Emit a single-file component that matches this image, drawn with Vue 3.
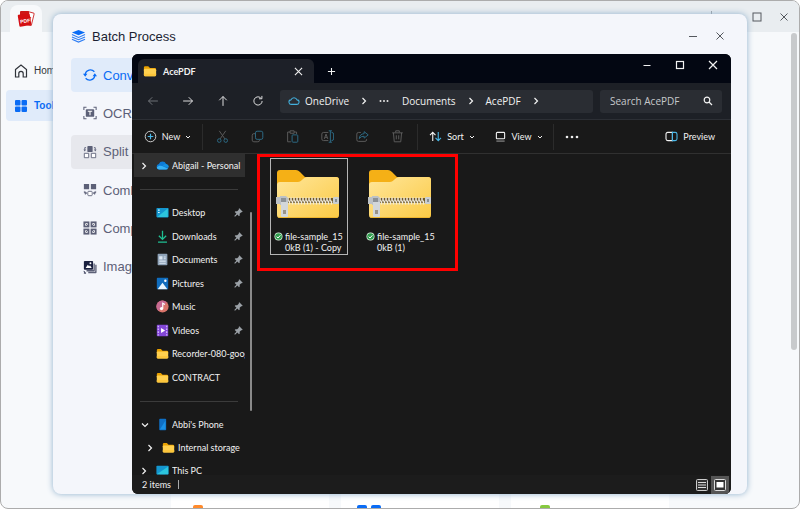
<script setup>
const folder =
  '<path d="M1 4q0-1.500 1.500-1.500h3.500l2 2h5.500q1.500 0 1.500 1.500v2H1z" fill="#e9a100"/><path d="M1 6.500q0-1 1-1h11q2 0 2 1.500v5.500q0 1.500-1.500 1.500h-11Q1 14 1 12.500z" fill="#ffd04f"/><path d="M1 11v1.500Q1 14 2.500 14h11q1.500 0 1.500-1.500V11z" fill="#fcc63c"/>'

const icons = {
  folder,
  desktop: '<rect x="0.500" y="2.500" width="15" height="11.500" rx="1" fill="#1496cf"/><path d="M1.500 13.500L14.500 3v10.500z" fill="#2cc5dd"/><path d="M2.500 5h2M2.500 8h2" stroke="#d9f8ff" stroke-width="1.500"/>',
  downloads: '<path d="M8 1v10M3.500 7L8 11.500 12.500 7M2.500 15h11" fill="none" stroke="#1fbf93" stroke-width="1.600"/>',
  documents: '<rect x="2" y="1" width="12" height="14" rx="1" fill="#8fa3b8"/><path d="M4 4h4v4H4z" fill="#dce7f2"/><path d="M9.500 5H12M9.500 7H12M4 10h8M4 12.500h8" stroke="#dce7f2" stroke-width="1.300"/>',
  pictures: '<rect x="1" y="1" width="14" height="14" rx="1" fill="#0f6cbd"/><path d="M2 15l6-8 6 8z" fill="#e7f6ff"/><circle cx="11.500" cy="4.500" r="1.500" fill="#fff"/>',
  music: '<circle cx="8" cy="8" r="7.500" fill="#d9746a"/><path d="M8 .5A7.500 7.500 0 0 0 3 13.500L13 2.500A7.500 7.500 0 0 0 8 .5z" fill="#c76a92"/><circle cx="6.800" cy="10.500" r="2" fill="#fff"/><path d="M8.300 10.500V4l2.700 1.500" fill="none" stroke="#fff" stroke-width="1.400"/>',
  videos: '<rect x="1" y="1" width="14" height="14" rx="1" fill="#8246d6"/><path d="M2.800 2v12M13.200 2v12" stroke="#d8bdff" stroke-width="1.500" stroke-dasharray="2 1.500"/><path d="M6.200 5v6l5-3z" fill="#fff"/>',
  cloud: '<path d="M4 13a3.500 3.500 0 0 1-.5-6.900A5 5 0 0 1 12.500 6 3.600 3.600 0 0 1 12.500 13z" fill="#0d7bd6"/><path d="M1 10.500C3 7.500 7 8 9.500 9.500l5.500 2.500q-1 1-2.500 1H4q-2.500 0-3-2.500z" fill="#36b2f4"/><path d="M8 8.500q2-3.500 5.500-2 2.500 1.200 2.300 4z" fill="#1490df"/>',
  phone: '<rect x="4" y="1" width="8.500" height="14" rx="1" fill="#0f6fc5"/><path d="M4.800 14L11.700 3v11z" fill="#1b90e5"/>',
  pc: '<rect x="0.500" y="2" width="15" height="11" rx="1" fill="#1496cf"/><path d="M1 12.500L15 3v9.500z" fill="#2cc5dd"/><path d="M5 14h6" stroke="#8aa" />',
  pin: '<path d="M9.500 .5l6 6-1.400 1.200-1.300-.3-2.800 3 .2 3-1.300 1.300L6 11.600 1.800 15.500l-1.300-1.300L4.400 10 1.300 6.900l1.300-1.300 3 .2 3-2.800-.3-1.300z" fill="#9ba1a7"/>',
  back: '<path d="M14.500 8H2M7 3L2 8l5 5" class="line"/>',
  forward: '<path d="M1.500 8H14M9 3l5 5-5 5" class="line"/>',
  up: '<path d="M8 14.500V2M3 7l5-5 5 5" class="line"/>',
  refresh: '<path d="M13.500 8A5.500 5.500 0 1 1 11.500 3.700M13.200 1.200v3.800H9.400" class="line"/>',
  cut: '<path d="M4 1l7 10M12 1L5 11" class="line"/><g stroke="#2d6b86" fill="none" stroke-width="1.200"><circle cx="4" cy="13" r="2.200"/><circle cx="12" cy="13" r="2.200"/></g>',
  copy: '<path d="M5 4.500H3.500q-2 0-2 2v6q0 2 2 2h5q2 0 2-2" class="line"/><rect x="5.500" y="1.500" width="9" height="10" rx="2" fill="none" stroke="#2d6b86" stroke-width="1.200"/>',
  paste: '<path d="M5 2.500H2v12h4M10 2.500h3V5M5 1h5v3H5z" class="line"/><rect x="7.500" y="6" width="7" height="9" rx="1" fill="none" stroke="#2d6b86" stroke-width="1.200"/>',
  rename: '<path d="M9 3H3Q1 3 1 5v6q0 2 2 2h6M4 11l2.200-6 2.200 6M5 9h2.500" class="line"/><path d="M9.500 1h4M9.500 15h4M11.500 1v14M13 3q2.500 0 2.500 2v6q0 2-2.500 2" fill="none" stroke="#2d6b86" stroke-width="1.200"/>',
  share: '<path d="M6 3H3Q1 3 1 5v7q0 2 2 2h8q2 0 2-2v-1" class="line"/><path d="M10 2l5 4-5 4V7.700Q6 7.500 4 10.500 4.500 5 10 4.500z" fill="none" stroke="#2d6b86" stroke-width="1.200"/>',
  trash: '<path d="M1.500 3.500h13M3 3.500l1 11h8l1-11M5.800 3V1h4.400v2M6.500 6.500v5M9.500 6.500v5" class="line"/>',
}

const quickAccess = [
  { label: 'Desktop', icon: 'desktop', pinned: true },
  { label: 'Downloads', icon: 'downloads', pinned: true },
  { label: 'Documents', icon: 'documents', pinned: true },
  { label: 'Pictures', icon: 'pictures', pinned: true },
  { label: 'Music', icon: 'music', pinned: true },
  { label: 'Videos', icon: 'videos', pinned: true },
  { label: 'Recorder-080-google', icon: 'folder', pinned: false },
  { label: 'CONTRACT', icon: 'folder', pinned: false },
]

const navButtons = [
  { icon: 'back', label: 'Back', dim: true },
  { icon: 'forward', label: 'Forward' },
  { icon: 'up', label: 'Up' },
  { icon: 'refresh', label: 'Refresh' },
]

const editButtons = [
  { icon: 'cut', label: 'Cut' },
  { icon: 'copy', label: 'Copy' },
  { icon: 'paste', label: 'Paste' },
  { icon: 'rename', label: 'Rename' },
  { icon: 'share', label: 'Share' },
  { icon: 'trash', label: 'Delete' },
]

const files = [
  { lines: ['file-sample_15', '0kB (1) - Copy'], focused: true },
  { lines: ['file-sample_15', '0kB (1)'], focused: false },
]

const teeth = Array.from({ length: 15 }, (_, i) => 12 + i * 3)

const tools = [
  { label: 'Convert', state: 'active', art: '<path d="M2.500 7A6 6 0 0 1 13 4.300M13.500 9A6 6 0 0 1 3 11.700" fill="none" stroke="currentColor" stroke-width="1.400"/><path d="M0 6.500h5L2.500 10zM11 9.500h5L13.500 6z" fill="currentColor"/>' },
  { label: 'OCR', state: '', art: '<path d="M1 4.500V1.500h3M12 1.500h3v3M15 11.500v3h-3M4 14.500H1v-3" fill="none" stroke="currentColor" stroke-width="1.200"/><rect x="3.200" y="3.700" width="9.600" height="8.600" rx="1" fill="currentColor"/><path d="M5.500 6h5M8 6v4.500" stroke="#fff" stroke-width="1.200"/>' },
  { label: 'Split', state: 'hover', art: '<rect x="5" y="1" width="6" height="7" rx="1" fill="currentColor"/><path d="M3.500 3H2v2.500M12.500 3H14v2.500" fill="none" stroke="currentColor"/><path d="M.5 5h3L2 7.500zM12.500 5h3L14 7.500z" fill="currentColor"/><path d="M1.500 9.500h5v5h-5zM9.500 9.500h5v5h-5z" fill="#fff" stroke="currentColor"/>' },
  { label: 'Combine', state: '', art: '<path d="M1 1h6v6H1zM9 1h6v6H9z" fill="currentColor"/><rect x="5.500" y="9.500" width="5" height="5" rx="1" fill="#fff" stroke="currentColor"/><path d="M1.500 9v2.500h1M14.500 9v2.500h-1M2.500 10l2 1.500-2 1.500zM13.500 10l-2 1.500 2 1.500z" fill="currentColor" stroke="currentColor" stroke-width=".6"/>' },
  { label: 'Compress', state: '', art: '<g fill="#fff" stroke="currentColor" stroke-width="2"><rect x="1.500" y="1.500" width="4.800" height="4.800"/><rect x="9.700" y="1.500" width="4.800" height="4.800"/><rect x="1.500" y="9.700" width="4.800" height="4.800"/><rect x="9.700" y="9.700" width="4.800" height="4.800"/></g><path d="M3 3l3.500 3.500M13 3L9.500 6.500M3 13l3.500-3.500M13 13L9.500 9.500" stroke="currentColor"/>' },
  { label: 'Image', state: '', art: '<path d="M14 5.500h1.500V14q0 1-1 1H6v-1.500h7q1 0 1-1z" fill="currentColor"/><path d="M12 4h1.500v8q0 1-1 1H4v-1.500h7q1 0 1-1z" fill="currentColor"/><rect x="1" y="1" width="10.500" height="10" rx="1" fill="#1b2140"/><path d="M3 9l2.500-3.500L7 7.200 8 6l2 3z" fill="#fff"/><circle cx="8.500" cy="3.800" r="1.100" fill="#fff"/><path d="M1 12.500l1.500 2.500M1 15h2.500" stroke="#1b2140"/>' },
]
</script>

<template>
  <div class="desktop">
    <div class="app">
      <header class="app-bar">
        <div class="app-tab">
          <svg viewBox="0 0 18 18" width="18" height="18" aria-label="AcePDF">
            <rect x="8" y="2" width="8" height="13" rx="1" transform="rotate(14 12 8)" fill="#fff" stroke="#d23c3c" />
            <path d="M10 5q4 1 3 4t1 4M10 12l4-5" fill="none" stroke="#d23c3c" />
            <rect x="3" y="1" width="9" height="11" rx="1" fill="#ce1717" />
            <rect x="1.500" y="4" width="12" height="12" rx="1" transform="rotate(-9 7 10)" fill="#d40f12" />
            <text x="3" y="13" transform="rotate(-9 7 10)" class="logo-text">PDF</text>
          </svg>
        </div>
        <div class="app-controls">
          <span class="app-rule"></span>
          <button type="button" aria-label="Maximize">
            <svg viewBox="0 0 10 10" width="10" height="10"><rect x="1" y="1" width="8" height="8" fill="none" stroke="#54585e" /></svg>
          </button>
          <button type="button" aria-label="Close">
            <svg viewBox="0 0 10 10" width="10" height="10"><path d="M1.500 1.500l7 7M8.500 1.500l-7 7" stroke="#54585e" /></svg>
          </button>
        </div>
      </header>
      <div class="app-body">
        <nav class="app-nav">
          <a href="#home">
            <svg viewBox="0 0 14 14" width="14" height="14"><path d="M1.500 5.500L7 1l5.500 4.500V13H9.200V9.500a2.200 2.200 0 0 0-4.400 0V13H1.500z" fill="none" stroke="#30343a" stroke-width="1.200" /></svg>
            Home
          </a>
          <a href="#tools" class="current">
            <svg viewBox="0 0 14 14" width="14" height="14" fill="#0a6cf5">
              <rect x="1" y="1" width="5.500" height="5.500" rx="1" /><rect x="7.500" y="1" width="5.500" height="5.500" rx="1" />
              <rect x="1" y="7.500" width="5.500" height="5.500" rx="1" /><rect x="7.500" y="7.500" width="5.500" height="5.500" rx="1" />
            </svg>
            Tools
          </a>
        </nav>
        <main class="app-main">
          <div class="cards">
            <div class="card"><i class="orange"></i></div>
            <div class="card"><i class="blue"></i><i class="blue"></i></div>
            <div class="card"><i class="green"></i></div>
          </div>
        </main>
        <div class="app-scroll"></div>
      </div>
    </div>

    <section class="dialog" aria-label="Batch Process">
      <header class="dialog-head">
        <svg viewBox="0 0 16 14" width="15" height="14">
          <path d="M8 .5l7 2.800-7 3-7-3z" fill="#0a6cf5" />
          <path d="M1 5.500l7 3 7-3M1 8l7 3 7-3M1 10.500l7 3 7-3" fill="none" stroke="#2d7df4" stroke-width="1.100" />
        </svg>
        <h1>Batch Process</h1>
        <button type="button" aria-label="Minimize"><svg viewBox="0 0 10 10" width="10" height="10"><path d="M1 5.500h8" stroke="#54585e" /></svg></button>
        <button type="button" aria-label="Close"><svg viewBox="0 0 10 10" width="10" height="10"><path d="M1.500 1.500l7 7M8.500 1.500l-7 7" stroke="#54585e" /></svg></button>
      </header>
      <nav class="tools">
        <a v-for="t in tools" :key="t.label" href="#" :class="t.state">
          <svg viewBox="0 0 16 16" width="14" height="14" v-html="t.art"></svg>{{ t.label }}
        </a>
      </nav>
    </section>

    <section class="explorer" aria-label="File Explorer">
      <header class="titlebar">
        <div class="tab">
          <svg viewBox="0 0 16 16" width="14" height="14" v-html="icons.folder"></svg>
          <b>AcePDF</b>
          <button type="button" aria-label="Close tab"><svg viewBox="0 0 10 10" width="9" height="9"><path d="M1 1l8 8M9 1L1 9" class="line" /></svg></button>
        </div>
        <button type="button" class="new-tab" aria-label="New tab"><svg viewBox="0 0 10 10" width="9" height="9"><path d="M5 1v8M1 5h8" class="line" /></svg></button>
        <div class="win-controls">
          <button type="button" aria-label="Minimize"><svg viewBox="0 0 10 10" width="10" height="10"><path d="M1.500 5.500h7" class="line" /></svg></button>
          <button type="button" aria-label="Maximize"><svg viewBox="0 0 10 10" width="10" height="10"><rect x="1.500" y="1.500" width="7" height="7" class="line" /></svg></button>
          <button type="button" aria-label="Close"><svg viewBox="0 0 10 10" width="10" height="10"><path d="M1 1l8 8M9 1L1 9" class="line" /></svg></button>
        </div>
      </header>

      <div class="navbar">
        <div class="nav-buttons">
          <button v-for="b in navButtons" :key="b.icon" type="button" :aria-label="b.label" :class="{ dim: b.dim }">
            <svg viewBox="0 0 16 16" width="12" height="12" v-html="icons[b.icon]"></svg>
          </button>
        </div>
        <div class="address">
          <svg viewBox="0 0 16 16" width="12" height="12"><path d="M4.500 12.500a3 3 0 0 1-.5-6 4.200 4.200 0 0 1 8 0 3 3 0 0 1-.5 6z" fill="none" stroke="#43b0dd" stroke-width="1.400" /></svg>
          <span class="crumb-one">OneDrive</span>
          <svg class="sep" viewBox="0 0 6 8" width="6" height="8"><path d="M1.500 1l3 3-3 3" class="line" /></svg>
          <svg class="dots" viewBox="0 0 10 4" width="10" height="4" fill="#e6e6e6"><circle cx="1.500" cy="2" r="1" /><circle cx="5" cy="2" r="1" /><circle cx="8.500" cy="2" r="1" /></svg>
          <span>Documents</span>
          <svg class="sep" viewBox="0 0 6 8" width="6" height="8"><path d="M1.500 1l3 3-3 3" class="line" /></svg>
          <span>AcePDF</span>
          <svg class="sep" viewBox="0 0 6 8" width="6" height="8"><path d="M1.500 1l3 3-3 3" class="line" /></svg>
        </div>
        <label class="search">
          <input type="text" placeholder="Search AcePDF" aria-label="Search AcePDF" />
          <svg viewBox="0 0 10 10" width="10" height="10"><circle cx="4" cy="4" r="2.800" class="line" /><path d="M6 6l3 3" class="line" /></svg>
        </label>
      </div>

      <div class="toolbar">
        <button type="button" class="cmd new">
          <svg viewBox="0 0 14 14" width="13" height="13"><circle cx="7" cy="7" r="5.700" fill="none" stroke="#d8d8d8" /><path d="M7 4v6M4 7h6" stroke="#49b6e6" stroke-width="1.300" /></svg>
          New
          <svg viewBox="0 0 6 4" width="6" height="4"><path d="M1 1l2 2 2-2" class="line thin" /></svg>
        </button>
        <div class="edit">
          <button v-for="b in editButtons" :key="b.icon" type="button" :aria-label="b.label" disabled>
            <svg viewBox="0 0 16 16" width="13" height="13" v-html="icons[b.icon]"></svg>
          </button>
        </div>
        <button type="button" class="cmd sort">
          <svg viewBox="0 0 14 12" width="13" height="11"><path d="M4 11V1.500M1 4.500l3-3 3 3" class="line" /><path d="M10 1v9.500M7 7.500l3 3 3-3" fill="none" stroke="#49b6e6" stroke-width="1.200" /></svg>
          Sort
          <svg viewBox="0 0 6 4" width="6" height="4"><path d="M1 1l2 2 2-2" class="line thin" /></svg>
        </button>
        <button type="button" class="cmd view">
          <svg viewBox="0 0 12 12" width="11" height="11"><rect x="1.500" y="1.500" width="9" height="7" rx="1" class="line" /><path d="M1.500 11h9" stroke="#aaa" /></svg>
          View
          <svg viewBox="0 0 6 4" width="6" height="4"><path d="M1 1l2 2 2-2" class="line thin" /></svg>
        </button>
        <button type="button" class="cmd more" aria-label="See more">
          <svg viewBox="0 0 14 4" width="14" height="4" fill="#eee"><circle cx="2" cy="2" r="1.300" /><circle cx="7" cy="2" r="1.300" /><circle cx="12" cy="2" r="1.300" /></svg>
        </button>
        <button type="button" class="cmd preview">
          <svg viewBox="0 0 14 12" width="13" height="11"><path d="M8 1.500H3q-2 0-2 2v5q0 2 2 2h5z" class="line" /><path d="M8 1.500h3q2 0 2 2v5q0 2-2 2H8z" fill="none" stroke="#49b6e6" stroke-width="1.200" /></svg>
          Preview
        </button>
      </div>

      <div class="content">
        <aside class="sidebar">
          <a href="#" class="row personal">
            <svg class="chev" viewBox="0 0 6 8" width="6" height="8"><path d="M1.500 1l3 3-3 3" class="line" /></svg>
            <svg viewBox="0 0 16 16" width="13" height="13" v-html="icons.cloud"></svg>
            <span>Abigail - Personal</span>
          </a>
          <hr />
          <div class="quick">
            <a v-for="q in quickAccess" :key="q.label" href="#" class="row">
              <i class="chev"></i>
              <svg viewBox="0 0 16 16" width="13" height="13" v-html="icons[q.icon]"></svg>
              <span>{{ q.label }}</span>
              <svg v-if="q.pinned" class="pin" viewBox="0 0 16 16" width="9" height="9" v-html="icons.pin"></svg>
            </a>
          </div>
          <hr />
          <div class="devices">
            <a href="#" class="row">
              <svg class="chev" viewBox="0 0 8 6" width="8" height="6"><path d="M1 1.500l3 3 3-3" class="line" /></svg>
              <svg viewBox="0 0 16 16" width="13" height="13" v-html="icons.phone"></svg>
              <span>Abbi's Phone</span>
            </a>
            <a href="#" class="row child">
              <svg class="chev" viewBox="0 0 6 8" width="6" height="8"><path d="M1.500 1l3 3-3 3" class="line" /></svg>
              <svg viewBox="0 0 16 16" width="13" height="13" v-html="icons.folder"></svg>
              <span>Internal storage</span>
            </a>
            <a href="#" class="row">
              <svg class="chev" viewBox="0 0 6 8" width="6" height="8"><path d="M1.500 1l3 3-3 3" class="line" /></svg>
              <svg viewBox="0 0 16 16" width="13" height="13" v-html="icons.pc"></svg>
              <span>This PC</span>
            </a>
          </div>
        </aside>
        <div class="side-scroll"><i></i></div>
        <div class="files">
          <a v-for="f in files" :key="f.lines[1]" href="#" class="file" :class="{ focused: f.focused }">
            <svg viewBox="0 0 64 50" width="64" height="50">
              <defs>
                <linearGradient id="front" x1="0" y1="0" x2="1" y2="1"><stop offset="0" stop-color="#ffe69a" /><stop offset="1" stop-color="#fbca45" /></linearGradient>
              </defs>
              <path d="M1 4q0-3 3-3h16q2 0 4 2l5 5h31q3 0 3 3v14H1z" fill="#f5b016" />
              <path d="M1 16q0-3 3-3h18q2 0 4-2l1-1q2-2 4-2h29q3 0 3 3v35q0 3-3 3H4q-3 0-3-3z" fill="url(#front)" />
              <path d="M1 45q0 4 3 4h56q3 0 3-4v1q0 2-3 2H4q-3 0-3-2z" fill="#eeb52f" />
              <path d="M11 31.500h47" stroke="#6f592a" stroke-width="5" />
              <path v-for="x in teeth" :key="x" :d="`M${x} 28.500v3l1.500 1v3`" fill="none" stroke="#eee9dc" stroke-width="1.500" />
              <rect x="57" y="28" width="6" height="7" rx="1" fill="#c9ced2" />
              <rect x="59" y="30" width="2" height="3" fill="#888f94" />
              <path d="M0 28h4v-1h6l2 2v5l-2 2H4v-1H0z" fill="#bcc1c6" />
              <rect x="5" y="29" width="5" height="4" fill="#8c9196" />
              <path d="M5 33h7v14q0 1-1 1H6q-1 0-1-1z" fill="#d3d7da" />
              <rect x="7" y="41" width="3" height="4" fill="#9a9388" />
            </svg>
            <span class="file-name">
              <svg viewBox="0 0 9 9" width="9" height="9"><circle cx="4.500" cy="4.500" r="4" fill="#dff3e2" /><circle cx="4.500" cy="4.500" r="3.300" fill="#309c4e" /><path d="M2.700 4.600L4 6l2.400-2.700" fill="none" stroke="#fff" /></svg>
              <span>{{ f.lines[0] }}<br />{{ f.lines[1] }}</span>
            </span>
          </a>
        </div>
        <div class="highlight"></div>
      </div>

      <footer class="status">
        <span>2 items</span><i class="caret"></i>
        <button type="button" class="details" aria-label="Details view"><svg viewBox="0 0 12 12" width="12" height="12"><rect x=".5" y=".5" width="11" height="11" rx="1" fill="#333" stroke="#ccc" /><path d="M2 3.500h8M2 6h8M2 8.500h8" stroke="#ddd" /></svg></button>
        <button type="button" class="selected" aria-label="Large icons"><svg viewBox="0 0 12 12" width="12" height="12"><rect x=".5" y=".5" width="11" height="11" rx="1" fill="#333" stroke="#ddd" /><rect x="2.500" y="3" width="7" height="5.500" fill="#fff" /></svg></button>
      </footer>
    </section>
  </div>
</template>

<style>
body {
  margin: 0;
  background: #fff;
}
</style>

<style scoped>
* {
  box-sizing: border-box;
}
button {
  display: flex;
  align-items: center;
  justify-content: center;
  padding: 0;
  border: 0;
  background: none;
  color: inherit;
  font: inherit;
}
a {
  color: inherit;
  text-decoration: none;
}
svg {
  flex: none;
  display: block;
}
.line,
:deep(.line) {
  fill: none;
  stroke: currentColor;
  stroke-width: 1.2;
}
.thin {
  stroke-width: 1;
}

.desktop {
  position: relative;
  display: flex;
  min-height: 100vh;
  overflow: hidden;
  font-family: "Liberation Sans", Arial, sans-serif;
}
.app {
  flex: 1;
  display: flex;
  flex-direction: column;
  border: 1px solid #acacac;
  border-radius: 8px;
  background: #f7f9fb;
  overflow: hidden;
}
.app-bar {
  display: flex;
  justify-content: space-between;
  height: 31px;
  background: #e9edf0;
}
.app-tab {
  display: flex;
  align-items: center;
  justify-content: center;
  width: 32px;
  margin: 4px 0 0 9px;
  border-radius: 8px 8px 0 0;
  background: #f7f9fb;
}
.logo-text {
  font: bold 5px "Liberation Sans", sans-serif;
  fill: #fff;
}
.app-controls {
  display: flex;
  align-items: center;
  gap: 17px;
  padding-right: 10px;
}
.app-rule {
  width: 1px;
  height: 12px;
  margin-right: 23px;
  background: #9ea2a6;
}
.app-body {
  flex: 1;
  display: flex;
}
.app-nav {
  display: flex;
  flex-direction: column;
  gap: 4px;
  width: 160px;
  padding: 23px 0 0 5px;
  font-size: 10px;
}
.app-nav a {
  display: flex;
  align-items: center;
  gap: 6px;
  height: 31px;
  padding-left: 8px;
  color: #30343a;
}
.app-nav .current {
  border-radius: 4px;
  background: #e0ebfa;
  color: #0a6cf5;
  font-weight: bold;
}
.app-main {
  flex: 1;
  display: flex;
  align-items: flex-end;
  padding: 0 122px 0 10px;
}
.cards {
  flex: 1;
  display: grid;
  grid-template-columns: repeat(3, 1fr);
  gap: 12px;
}
.card {
  display: flex;
  align-items: flex-end;
  gap: 4px;
  height: 30px;
  padding-left: 16px;
  background: #fff;
}
.card i {
  width: 10px;
  height: 3px;
  border-radius: 2px 2px 0 0;
}
.card .orange {
  margin-left: 6px;
  background: #ff8a2b;
}
.card .blue {
  background: #0a6cf5;
}
.card .green {
  margin-left: 13px;
  background: #86c940;
}
.app-scroll {
  width: 6px;
  height: 317px;
  margin: 1px 2px 0 0;
  border-radius: 4px;
  background: #c8cacc;
}

.dialog {
  position: absolute;
  inset: 14px 53px 15px 53px;
  border-radius: 8px;
  background: #f4f6fb;
  box-shadow: 0 0 6px #8fb0cc;
}
.dialog-head {
  display: flex;
  align-items: center;
  height: 44px;
  padding: 0 22px 0 18px;
}
.dialog-head h1 {
  flex: 1;
  margin: 0 0 0 6px;
  color: #1b1f33;
  font-size: 13px;
  font-weight: normal;
}
.dialog-head button + button {
  margin-left: 17px;
}
.tools {
  display: grid;
  grid-auto-rows: 1fr;
  gap: 4px;
  width: 180px;
  height: 226px;
  margin-left: 18px;
  color: #5c6077;
  font-size: 13px;
}
.tools a {
  display: flex;
  align-items: center;
  gap: 6px;
  padding-left: 12px;
  border-radius: 4px;
}
.tools .active {
  background: #e0ebfa;
  color: #0a6cf5;
}
.tools .hover {
  background: #e7e8ed;
}

.explorer {
  position: absolute;
  inset: 54px 69px 15px 132px;
  display: flex;
  flex-direction: column;
  border-radius: 6px;
  background: #191919;
  color: #f2f2f2;
  font-family: Lato, "Open Sans", sans-serif;
  font-size: 9px;
  overflow: hidden;
}
.titlebar {
  display: flex;
  align-items: center;
  height: 29px;
  padding-left: 6px;
  background: #030712;
}
.tab {
  display: flex;
  align-items: center;
  align-self: flex-end;
  width: 176px;
  height: 24px;
  padding: 0 11px 0 5px;
  border-radius: 6px 6px 0 0;
  background: #1d2028;
}
.tab b {
  flex: 1;
  margin-left: 6px;
  font-weight: bold;
}
.new-tab {
  width: 34px;
  margin-top: 6px;
}
.win-controls {
  display: flex;
  gap: 23px;
  margin: 0 13px 8px auto;
}
.navbar {
  display: flex;
  align-items: center;
  height: 37px;
  padding: 0 9px 0 3px;
  border-bottom: 1px solid #2c2f35;
  background: #1d2026;
  font-family: "Open Sans", "Noto Sans", sans-serif;
  font-size: 10px;
}
.nav-buttons {
  display: flex;
  width: 145px;
}
.nav-buttons button {
  width: 35px;
}
.nav-buttons .dim {
  color: #777a80;
}
.address {
  flex: 1;
  display: flex;
  align-items: center;
  height: 23px;
  padding-left: 8px;
  border-radius: 3px;
  background: #2a2d33;
}
.crumb-one {
  margin-left: 5px;
}
.sep {
  margin: 0 12px;
}
.dots {
  margin-right: 13px;
}
.search {
  display: flex;
  align-items: center;
  width: 122px;
  height: 23px;
  margin-left: 7px;
  padding: 0 9px 0 10px;
  border-radius: 3px;
  background: #2a2d33;
}
.search input {
  flex: 1;
  min-width: 0;
  padding: 0;
  border: 0;
  outline: 0;
  background: none;
  color: #d0d0d0;
  font: inherit;
}
.search input::placeholder {
  color: #c6c8cb;
  opacity: 1;
}
.toolbar {
  display: flex;
  align-items: center;
  height: 34px;
  padding: 0 16px 0 13px;
  border-bottom: 1px solid #303030;
}
.cmd {
  gap: 5px;
}
.new {
  width: 45px;
}
.edit {
  display: flex;
  align-items: center;
  height: 26px;
  margin: 0 12px;
  padding: 0 2px;
  border: solid #2b2b2b;
  border-width: 0 1px;
}
.edit button {
  width: 35px;
  color: #5c5c5c;
}
.sort {
  width: 44px;
}
.view {
  width: 46px;
  margin-left: 22px;
}
.more {
  height: 26px;
  margin-left: 11px;
  padding-left: 11px;
  border-left: 1px solid #2b2b2b;
}
.preview {
  margin-left: auto;
}
.content {
  position: relative;
  flex: 1;
  display: flex;
  min-height: 0;
  overflow: hidden;
}
.sidebar {
  width: 113px;
  height: 0;
  min-height: 100%;
  padding-left: 2px;
  overflow: hidden;
}
.sidebar hr {
  height: 1px;
  margin: 12px 7px 11px 6px;
  border: 0;
  background: #3b3b3b;
}
.row {
  display: grid;
  grid-template-columns: 22px 13px 1fr auto;
  align-items: center;
  height: 23px;
  overflow: hidden;
  white-space: nowrap;
}
.row span {
  min-width: 0;
  margin-left: 3px;
  overflow: hidden;
}
.personal {
  background: #2f2f2f;
}
.chev {
  justify-self: start;
  margin-left: 7px;
}
.quick,
.devices {
  display: grid;
  grid-auto-rows: 1fr;
}
.quick {
  height: 188px;
}
.devices {
  height: 69px;
}
.quick .row,
.devices .row {
  height: auto;
}
.pin {
  margin-right: 2px;
}
.devices .child {
  padding-left: 6px;
}
.side-scroll {
  width: 13px;
  padding: 58px 5px 0 5px;
}
.side-scroll i {
  display: block;
  width: 2px;
  height: 199px;
  border-radius: 1px;
  background: #8a8a8a;
}
.files {
  display: flex;
  align-items: flex-start;
  gap: 14px;
  padding: 4px 0 0 12px;
}
.file {
  width: 78px;
  padding: 10px 0 0 5px;
  height: 97px;
  border: 1px solid transparent;
}
.focused {
  border-color: #b5b5b5;
}
.file-name {
  display: flex;
  gap: 2px;
  margin: 12px 0 0 -2px;
  line-height: 11px;
  white-space: nowrap;
}
.file-name svg {
  margin-top: 1px;
}
.highlight {
  position: absolute;
  top: 0;
  left: 125px;
  width: 201px;
  height: 117px;
  border: 3px solid #ff0000;
}
.status {
  display: flex;
  align-items: center;
  height: 19px;
  padding: 0 2px 0 10px;
  background: #1c1c1c;
}
.caret {
  width: 1px;
  height: 9px;
  margin: 0 auto 0 7px;
  background: #aaa;
}
.status button {
  width: 18px;
  height: 18px;
}
.status .selected {
  background: #555;
}
</style>
